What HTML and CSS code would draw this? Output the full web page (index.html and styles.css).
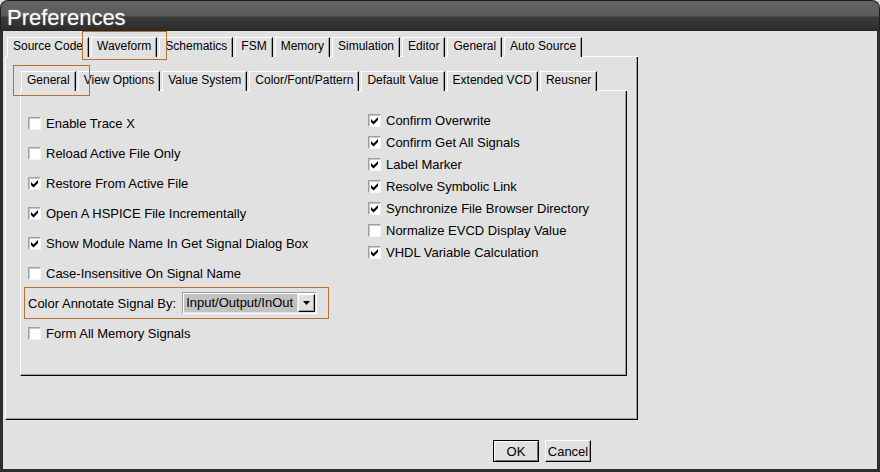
FILE: index.html
```html
<!DOCTYPE html>
<html>
<head>
<meta charset="utf-8">
<title>Preferences</title>
<link rel="stylesheet" href="styles.css">
</head>
<body>
<div class="window">
  <div class="titlebar"><span class="title">Preferences</span></div>
  <div class="client">
    <div class="notebook outer">
      <div class="tabs">
        <div class="tab">Source Code</div>
        <div class="tab">Waveform<span class="focus focus-outer"></span></div>
        <div class="tab">Schematics</div>
        <div class="tab">FSM</div>
        <div class="tab">Memory</div>
        <div class="tab">Simulation</div>
        <div class="tab">Editor</div>
        <div class="tab">General</div>
        <div class="tab">Auto Source</div>
      </div>
      <div class="panel outer-panel">
        <div class="notebook inner">
          <div class="tabs inner-tabs">
            <div class="tab">General<span class="focus focus-inner"></span></div>
            <div class="tab">View Options</div>
            <div class="tab">Value System</div>
            <div class="tab">Color/Font/Pattern</div>
            <div class="tab">Default Value</div>
            <div class="tab">Extended VCD</div>
            <div class="tab">Reusner</div>
          </div>
          <div class="panel inner-panel">
            <div class="col col-left">
              <div class="opt"><span class="cb"></span>Enable Trace X</div>
              <div class="opt"><span class="cb"></span>Reload Active File Only</div>
              <div class="opt"><span class="cb"><svg viewBox="1 1 11 11"><path d="M3 5L5.5 7.5L10 3V6L5.5 10.5L3 8Z"/></svg></span>Restore From Active File</div>
              <div class="opt"><span class="cb"><svg viewBox="1 1 11 11"><path d="M3 5L5.5 7.5L10 3V6L5.5 10.5L3 8Z"/></svg></span>Open A HSPICE File Incrementally</div>
              <div class="opt"><span class="cb"><svg viewBox="1 1 11 11"><path d="M3 5L5.5 7.5L10 3V6L5.5 10.5L3 8Z"/></svg></span>Show Module Name In Get Signal Dialog Box</div>
              <div class="opt"><span class="cb"></span>Case-Insensitive On Signal Name</div>
              <div class="annot">
                <span>Color Annotate Signal By:</span>
                <div class="combo">
                  <span class="combo-text">Input/Output/InOut</span>
                  <span class="combo-btn"><svg viewBox="0 0 7 4"><path d="M0 0H7L3.5 4Z"/></svg></span>
                </div>
              </div>
              <div class="opt"><span class="cb"></span>Form All Memory Signals</div>
            </div>
            <div class="col col-right">
              <div class="opt"><span class="cb"><svg viewBox="1 1 11 11"><path d="M3 5L5.5 7.5L10 3V6L5.5 10.5L3 8Z"/></svg></span>Confirm Overwrite</div>
              <div class="opt"><span class="cb"><svg viewBox="1 1 11 11"><path d="M3 5L5.5 7.5L10 3V6L5.5 10.5L3 8Z"/></svg></span>Confirm Get All Signals</div>
              <div class="opt"><span class="cb"><svg viewBox="1 1 11 11"><path d="M3 5L5.5 7.5L10 3V6L5.5 10.5L3 8Z"/></svg></span>Label Marker</div>
              <div class="opt"><span class="cb"><svg viewBox="1 1 11 11"><path d="M3 5L5.5 7.5L10 3V6L5.5 10.5L3 8Z"/></svg></span>Resolve Symbolic Link</div>
              <div class="opt"><span class="cb"><svg viewBox="1 1 11 11"><path d="M3 5L5.5 7.5L10 3V6L5.5 10.5L3 8Z"/></svg></span>Synchronize File Browser Directory</div>
              <div class="opt"><span class="cb"></span>Normalize EVCD Display Value</div>
              <div class="opt"><span class="cb"><svg viewBox="1 1 11 11"><path d="M3 5L5.5 7.5L10 3V6L5.5 10.5L3 8Z"/></svg></span>VHDL Variable Calculation</div>
            </div>
          </div>
        </div>
      </div>
    </div>
    <div class="buttons">
      <button class="btn btn-default">OK</button>
      <button class="btn">Cancel</button>
    </div>
  </div>
</div>
</body>
</html>
```
FILE: styles.css
```css
* { box-sizing: border-box; }
html, body { margin: 0; padding: 0; }
body {
  width: 880px;
  height: 472px;
  overflow: hidden;
  background: #e1e1e1;
  font-family: "Liberation Sans", Arial, sans-serif;
  color: #000;
}
.window {
  width: 880px;
  height: 472px;
  display: flex;
  flex-direction: column;
}
.titlebar {
  height: 31px;
  flex: none;
  background: linear-gradient(#656565 0, #595959 15px, #3b3b3b 16px, #2c2c2c 29px, #1c1c1c 31px);
  border: 1px solid #1e1e1e;
  border-bottom: none;
  border-radius: 8px 8px 0 0;
  padding: 3px 0 0 6px;
}
.title {
  display: block;
  color: #fff;
  font-size: 22px;
  line-height: 27px;
  text-shadow: 0 0 2px rgba(255, 255, 255, 0.35);
}
.client {
  flex: 1;
  background: #e1e1e1;
  border: solid #2e2e2e;
  border-width: 0 3px 3px 3px;
  padding: 6px 0 0 2px;
}
.notebook { display: flex; flex-direction: column; }
.outer { width: 633px; }
.inner { width: 607px; }
.tabs {
  display: flex;
  height: 20px;
  border-bottom: 1px solid #fff;
  padding-left: 2px;
}
.inner-tabs { padding-left: 1px; }
.tab {
  position: relative;
  height: 20px;
  margin: 0 2px -1px 0;
  padding: 0 5px 2px 5px;
  font-size: 12px;
  line-height: 17px;
  white-space: nowrap;
  background: #e1e1e1;
  border-top: 1px solid #fff;
  border-left: 1px solid #fff;
  border-right: 1px solid #000;
  box-shadow: inset -1px 0 0 #a0a0a0;
}
.focus {
  position: absolute;
  z-index: 2;
  border: 1px solid #b5712f;
  pointer-events: none;
}
.focus-outer { left: -10px; top: -7px; width: 85px; height: 29px; }
.focus-inner { left: -9px; top: -7px; width: 77px; height: 31px; }
.panel {
  border-left: 1px solid #fff;
  border-right: 1px solid #000;
  border-bottom: 1px solid #000;
  box-shadow: inset -1px -1px 0 #a0a0a0;
}
.outer-panel { padding: 14px 9px 43px 14px; }
.inner-panel {
  display: grid;
  grid-template-columns: 340px 1fr;
  padding: 17px 0 27px 7px;
}
.col { display: flex; flex-direction: column; }
.col-right { padding-top: 1px; }
.opt {
  display: flex;
  align-items: center;
  gap: 5px;
  height: 30px;
  font-size: 13px;
  white-space: nowrap;
}
.col-right .opt { height: 22px; }
.cb {
  flex: none;
  width: 13px;
  height: 13px;
  background: #fff;
  border: 1px solid;
  border-color: #a0a0a0 #f4f4f4 #f4f4f4 #a0a0a0;
  box-shadow: inset 1px 1px 0 #c8c8c8;
  display: flex;
}
.cb svg { width: 11px; height: 11px; fill: #000; }
.annot {
  display: flex;
  align-items: center;
  gap: 6px;
  width: 305px;
  height: 32px;
  margin: -1px 0 -1px -4px;
  padding-left: 3px;
  border: 1px solid #b5712f;
  font-size: 13px;
  white-space: nowrap;
}
.combo {
  display: flex;
  width: 135px;
  height: 22px;
  border: 1px solid;
  border-color: #a0a0a0 #fff #fff #a0a0a0;
  box-shadow: inset 1px 1px 0 #fff;
  padding: 1px;
  gap: 1px;
}
.combo-text {
  flex: 1;
  background: #c2c2c2;
  padding-left: 2px;
  line-height: 18px;
  font-size: 13px;
}
.combo-btn {
  flex: none;
  width: 17px;
  height: 18px;
  background: #e1e1e1;
  border: 1px solid;
  border-color: #fff #000 #000 #fff;
  box-shadow: inset -1px -1px 0 #a0a0a0;
  display: flex;
  align-items: center;
  justify-content: center;
}
.combo-btn svg { width: 7px; height: 4px; fill: #000; margin-right: 1px; }
.buttons {
  display: flex;
  gap: 6px;
  margin-top: 20px;
  padding-left: 488px;
}
.btn {
  width: 46px;
  height: 22px;
  padding: 0;
  font-family: "Liberation Sans", Arial, sans-serif;
  font-size: 13px;
  color: #000;
  background: #e1e1e1;
  border: 1px solid;
  border-color: #fff #000 #000 #fff;
  box-shadow: inset -1px -1px 0 #a0a0a0;
}
.btn-default {
  border-color: #000;
  box-shadow: inset 1px 1px 0 #fff, inset -1px -1px 0 #707070;
}
```
